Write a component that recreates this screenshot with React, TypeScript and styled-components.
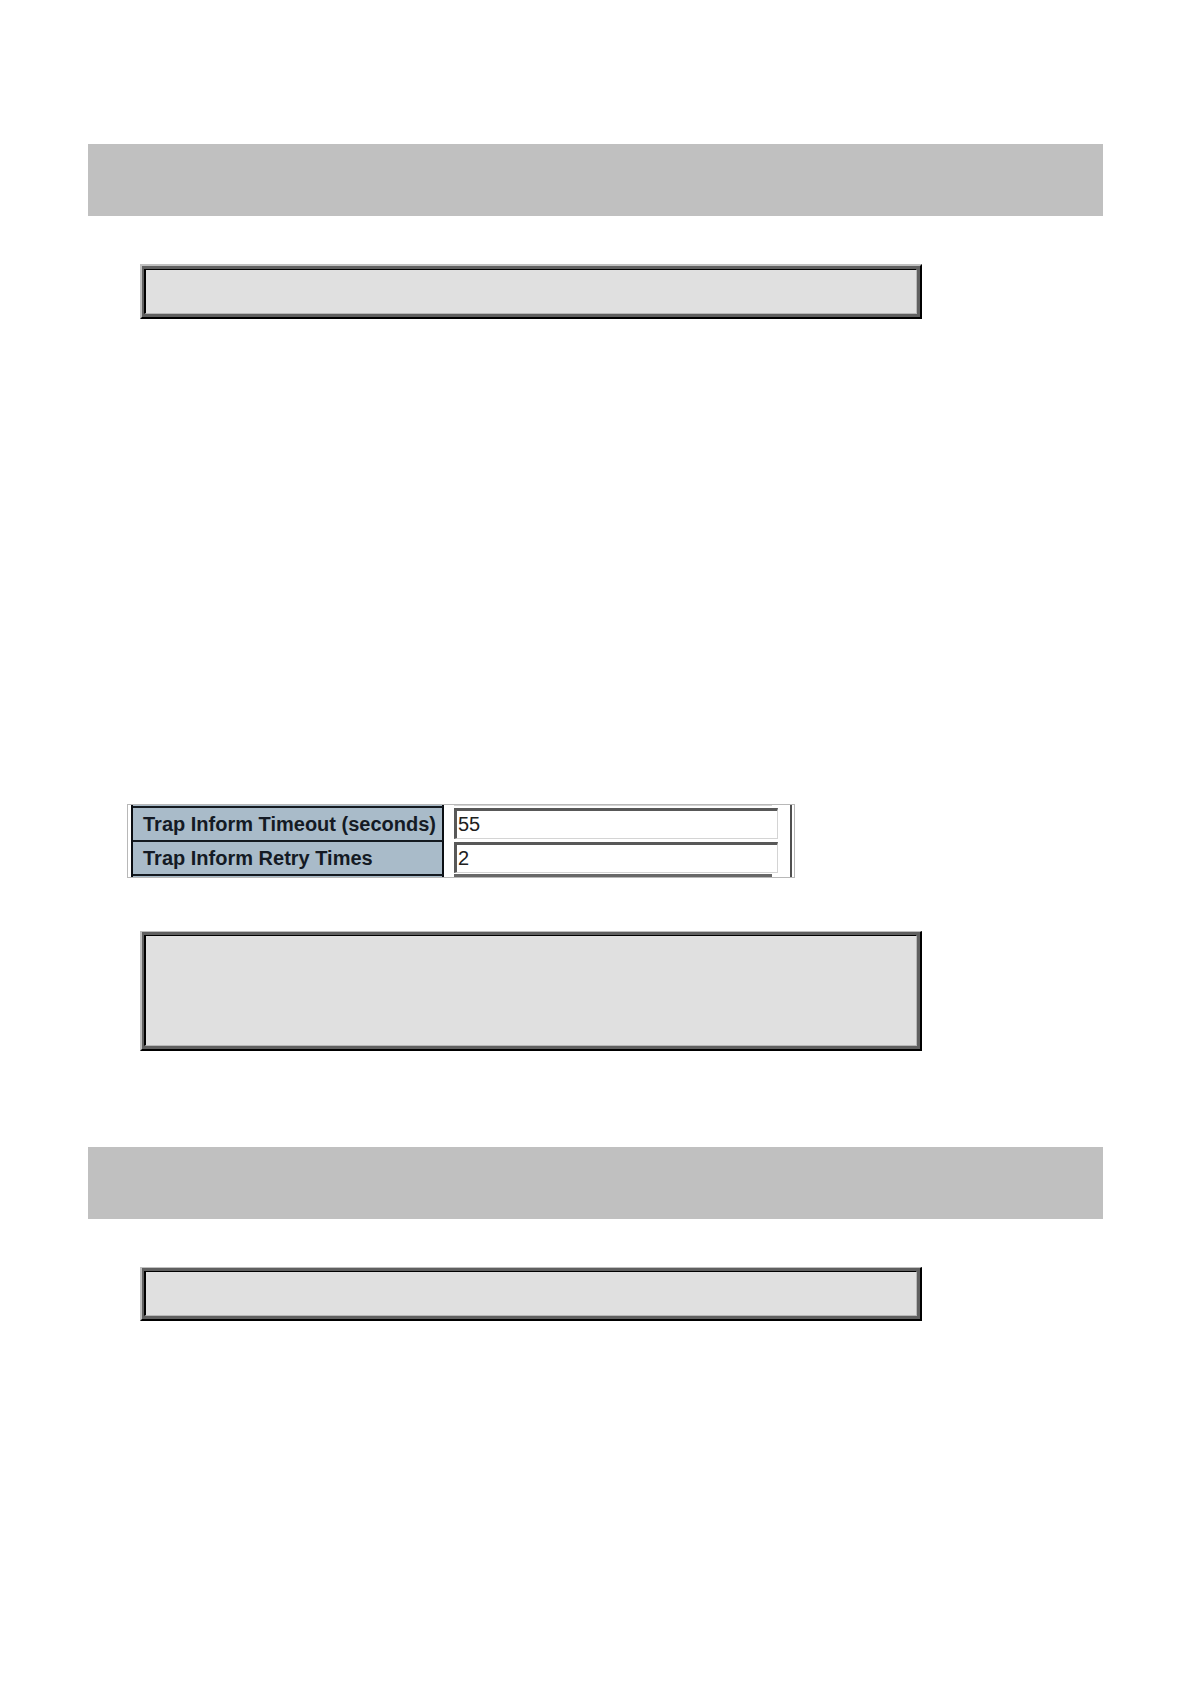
import React from "react";
import styled, { createGlobalStyle } from "styled-components";

const GlobalStyle = createGlobalStyle`
  *, *::before, *::after { box-sizing: border-box; }
  body {
    margin: 0;
    background: #ffffff;
    font-family: "Liberation Sans", Arial, sans-serif;
  }
`;

const Page = styled.main`
  padding: 144px 88px 360px;
`;

const Banner = styled.header`
  height: 72px;
  background: #c0c0c0;
`;

const Section = styled.section<{ $spaced?: boolean }>`
  padding-top: ${(p) => (p.$spaced ? 96 : 0)}px;
`;

const Content = styled.div`
  display: flex;
  flex-direction: column;
  padding: 48px 0 0 52px;
`;

const Frame = styled.div<{ $rim: number }>`
  width: 100%;
  max-width: 782px;
  background: #606060;
  border-style: solid;
  border-width: ${(p) => p.$rim}px 2px 2px;
  border-color: #c0c0c0 #000000 #000000 #c0c0c0;
  padding: 3px 3px 3px 2px;
`;

const Well = styled.div<{ $height: number }>`
  height: ${(p) => p.$height}px;
  background: #e0e0e0;
  border-style: solid;
  border-width: 1px 1px 1px 2px;
  border-color: #000000 #b8b8b8 #b8b8b8 #000000;
`;

const Settings = styled.form`
  width: 100%;
  max-width: 668px;
  margin: 485px 0 53px -13px;
  border: 1px solid #b8b8b8;
  padding: 0 2px 0 3px;
`;

const SettingsGrid = styled.div`
  border-left: 2px solid #0b0f14;
  border-right: 2px solid #505050;
`;

const Row = styled.div<{ $height: number }>`
  display: grid;
  grid-template-columns: 311px 1fr;
  height: ${(p) => p.$height}px;
`;

const Label = styled.label`
  display: flex;
  align-items: center;
  padding: 0 0 1px 10px;
  background: #a9bbc9;
  border-top: 2px solid #141a20;
  border-right: 2px solid #0b0f14;
  color: #141a24;
  font-size: 20px;
  line-height: 24px;
  font-weight: 700;
  white-space: nowrap;
`;

const LabelEdge = styled.div<{ $line?: boolean }>`
  background: #a9bbc9;
  border-top: ${(p) => (p.$line ? "2px solid #141a20" : "0")};
  border-right: 2px solid #0b0f14;
`;

const Field = styled.div`
  padding: 2px 12px 1px 10px;
`;

const FieldEdge = styled.div<{ $color: string }>`
  margin: 0 18px 0 10px;
  background: ${(p) => p.$color};
`;

const Input = styled.input`
  display: block;
  width: 100%;
  height: 31px;
  margin: 0;
  padding: 0 1px;
  border-style: solid;
  border-width: 3px 1px 1px 3px;
  border-color: #585858 #d4d4d4 #d4d4d4 #585858;
  border-radius: 0;
  outline: none;
  background: #ffffff;
  color: #202020;
  font-family: inherit;
  font-size: 20px;
  line-height: 24px;
`;

interface SunkenBoxProps {
  height: number;
  rim?: number;
}

function SunkenBox({ height, rim = 1 }: SunkenBoxProps) {
  return (
    <Frame $rim={rim}>
      <Well $height={height} />
    </Frame>
  );
}

const settings = [
  { id: "inform-timeout", label: "Trap Inform Timeout (seconds)", value: "55" },
  { id: "inform-retry", label: "Trap Inform Retry Times", value: "2" },
];

export default function App() {
  return (
    <>
      <GlobalStyle />
      <Page>
        <Section>
          <Banner />
          <Content>
            <SunkenBox height={45} rim={2} />
            <Settings>
              <SettingsGrid>
                <Row $height={1}>
                  <LabelEdge />
                  <FieldEdge $color="#d4d4d4" />
                </Row>
                {settings.map((item) => (
                  <Row key={item.id} $height={34}>
                    <Label htmlFor={item.id}>{item.label}</Label>
                    <Field>
                      <Input id={item.id} type="text" defaultValue={item.value} />
                    </Field>
                  </Row>
                ))}
                <Row $height={3}>
                  <LabelEdge $line />
                  <FieldEdge $color="#686868" />
                </Row>
              </SettingsGrid>
            </Settings>
            <SunkenBox height={111} />
          </Content>
        </Section>
        <Section $spaced>
          <Banner />
          <Content>
            <SunkenBox height={45} />
          </Content>
        </Section>
      </Page>
    </>
  );
}
